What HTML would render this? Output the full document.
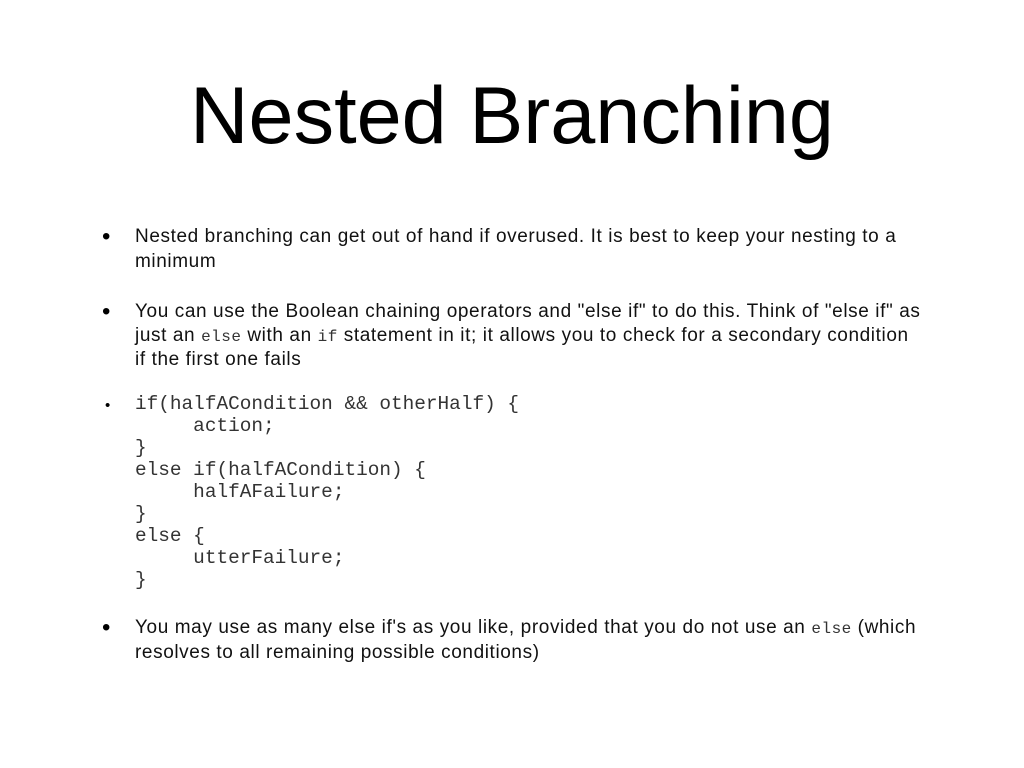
<!DOCTYPE html>
<html><head><meta charset="utf-8"><style>
body{margin:0;background:#fff;width:1024px;height:768px;overflow:hidden;position:relative;font-family:"Liberation Sans",Arial,sans-serif;color:#000}
.t{position:absolute;left:0;width:1024px;text-align:center;top:66px;font-size:81px;line-height:100px;font-weight:normal;letter-spacing:0}
.l{position:absolute;left:135px;font-size:19px;letter-spacing:0.6px;line-height:25px;white-space:nowrap;color:#111}
.b{position:absolute;left:102px;font-size:24px;line-height:25px}
.m{font-family:"Liberation Mono","Courier New",monospace;font-size:16px;letter-spacing:0.5px;color:#333}
.c{position:absolute;left:135px;font-family:"Liberation Mono","Courier New",monospace;font-size:19.4px;line-height:22px;white-space:pre;color:#333}
</style></head><body>
<div class="t">Nested Branching</div>
<div class="b" style="top:224px">•</div>
<div class="l" style="top:224px">Nested branching can get out of hand if overused. It is best to keep your nesting to a</div>
<div class="l" style="top:249px">minimum</div>
<div class="b" style="top:299px">•</div>
<div class="l" style="top:299px">You can use the Boolean chaining operators and "else if" to do this. Think of "else if" as</div>
<div class="l" style="top:323px">just an <span class="m">else</span> with an <span class="m">if</span> statement in it; it allows you to check for a secondary condition</div>
<div class="l" style="top:347px">if the first one fails</div>
<div class="b" style="top:393px;font-size:15px;left:105px">•</div>
<div class="c" style="top:393px">if(halfACondition &amp;&amp; otherHalf) {
     action;
}
else if(halfACondition) {
     halfAFailure;
}
else {
     utterFailure;
}</div>
<div class="b" style="top:615px">•</div>
<div class="l" style="top:615px">You may use as many else if's as you like, provided that you do not use an <span class="m">else</span> (which</div>
<div class="l" style="top:640px">resolves to all remaining possible conditions)</div>
</body></html>
